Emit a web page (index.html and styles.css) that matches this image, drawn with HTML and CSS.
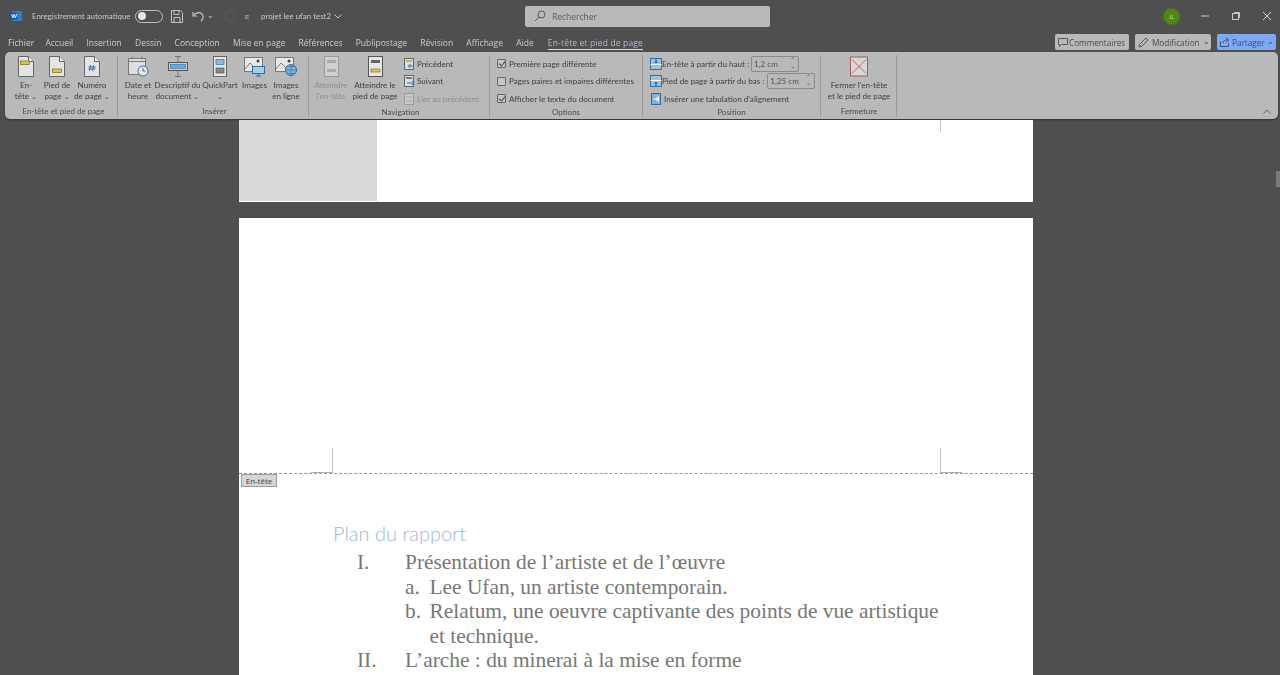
FILE: index.html
```html
<!DOCTYPE html>
<html lang="fr">
  <head>
    <meta charset="utf-8" />
    <meta name="viewport" content="width=device-width, initial-scale=1.0" />
    <title>projet lee ufan test2</title>
    <link rel="stylesheet" href="styles.css">
  </head>

  <body>
    <header class="titlebar">
      <svg class="wordlogo" width="12" height="10" viewBox="0 0 12 10"><rect x="2" y="0" width="10" height="10" rx="1" fill="#2b7cd3"/><rect x="0" y="1.5" width="7" height="7" fill="#1a4fa0"/><text x="1.2" y="7.2" font-size="6" font-weight="700" fill="#fff" font-family="Liberation Sans">W</text></svg>
      <span class="autosave">Enregistrement automatique</span>
      <span class="toggle"><span class="knob"></span></span>
      <svg class="qa qa-save" width="12" height="13" viewBox="0 0 12 13" fill="none" stroke="#c4c4c4"><path d="M.5.5h9l2 2v10H.5z"/><path d="M3 .5v4h5v-4M3 12.5v-5h6v5"/></svg>
      <svg class="qa qa-undo" width="12" height="11" viewBox="0 0 12 11" fill="none" stroke="#c4c4c4" stroke-width="1.2"><path d="M1 1v4h4"/><path d="M1.2 5C3 1.8 7 .8 9.500 2.500c2.500 2 2 5.500-.5 7.500"/></svg>
      <span class="caret qa-caret">⌄</span>
      <svg class="qa qa-redo" width="12" height="12" viewBox="0 0 12 12" fill="none" stroke="#5c5c5c"><circle cx="6" cy="6" r="5"/></svg>
      <span class="qa-more">≡</span>
      <span class="doctitle">projet lee ufan test2</span>
      <svg class="qa-chev" width="8" height="5" viewBox="0 0 8 5" fill="none" stroke="#c8c8c8"><path d="M.5.5 4 4 7.500.5"/></svg>
      <div class="search">
        <svg width="12" height="12" viewBox="0 0 12 12" fill="none" stroke="#555"><circle cx="7.500" cy="4.500" r="3.500"/><path d="M5 7 1 11"/></svg>
        <span>Rechercher</span>
      </div>
      <span class="avatar">JL</span>
      <svg class="winbtn" width="10" height="10" viewBox="0 0 10 10" stroke="#c8c8c8" fill="none"><path d="M1 5h8"/></svg>
      <svg class="winbtn" width="10" height="10" viewBox="0 0 10 10" stroke="#c8c8c8" fill="none"><rect x="1.500" y="2.500" width="6" height="6"/><path d="M3.500 2.500v-1h5v5h-1"/></svg>
      <svg class="winbtn" width="10" height="10" viewBox="0 0 10 10" stroke="#d0d0d0" fill="none"><path d="m1 1 8 8M9 1 1 9"/></svg>
    </header>

    <nav class="tabs">
      <a class="first">Fichier</a>
      <a>Accueil</a>
      <a>Insertion</a>
      <a>Dessin</a>
      <a>Conception</a>
      <a>Mise en page</a>
      <a>Références</a>
      <a>Publipostage</a>
      <a>Révision</a>
      <a>Affichage</a>
      <a>Aide</a>
      <a class="active">En-tête et pied de page</a>
      <div class="tabactions">
        <button class="pill p-comments">
          <svg width="10" height="10" viewBox="0 0 10 10" fill="none" stroke="#555"><path d="M.5 1.500h9v6h-6l-2 2v-2h-1z"/></svg>
          Commentaires
        </button>
        <button class="pill p-edit">
          <svg width="11" height="11" viewBox="0 0 11 11" fill="none" stroke="#555"><path d="M1 10l.7-2.800L8 1l2 2-6.200 6.300z"/></svg>
          Modification <span class="caret">⌄</span>
        </button>
        <button class="pill share">
          <svg width="10" height="10" viewBox="0 0 10 10" fill="none" stroke="#2f4f8f"><path d="M.5 4.500v5h8v-3M3 6c0-2 2-3 4-3M6 .8 8.800 3 6 5.200"/></svg>
          Partager <span class="caret">⌄</span>
        </button>
      </div>
    </nav>

    <section class="ribbon">
      <div class="group g1">
        <div class="tools">
          <div class="big w32">
            <svg class="ico" width="16" height="21" viewBox="0 0 16 21"><path d="M.5.5h10l5 5v15H.5z" fill="#e4e4e4" stroke="#666"/><path d="M10.500.5v5h5" fill="#f4f4f4" stroke="#666"/><rect x="2.500" y="5" width="9" height="3.500" fill="#dcc64a" stroke="#7a6a20" stroke-width=".7"/></svg>
            <span>En-<br>tête <i>⌄</i></span>
          </div>
          <div class="big w30">
            <svg class="ico" width="16" height="21" viewBox="0 0 16 21"><path d="M.5.5h10l5 5v15H.5z" fill="#e4e4e4" stroke="#666"/><path d="M10.500.5v5h5" fill="#f4f4f4" stroke="#666"/><rect x="3.500" y="13" width="9" height="3.500" fill="#dcc64a" stroke="#7a6a20" stroke-width=".7"/></svg>
            <span>Pied de<br>page <i>⌄</i></span>
          </div>
          <div class="big w40">
            <svg class="ico" width="16" height="21" viewBox="0 0 16 21"><path d="M.5.5h10l5 5v15H.5z" fill="#e4e4e4" stroke="#666"/><path d="M10.500.5v5h5" fill="#f4f4f4" stroke="#666"/><path d="M6.500 9l-1 6M9.500 9l-1 6M4.500 11h7M4.500 13h7" stroke="#2f6fa8" fill="none"/></svg>
            <span>Numéro<br>de page <i>⌄</i></span>
          </div>
        </div>
        <div class="grouplabel">En-tête et pied de page</div>
      </div>

      <div class="group g2">
        <div class="tools">
          <div class="big w34">
            <svg class="ico" width="21" height="21" viewBox="0 0 21 21"><rect x=".5" y="2.500" width="17" height="16" fill="#dedede" stroke="#777"/><path d="M.5 5.500h17M4 .5v3M14 .5v3" stroke="#777" fill="none"/><circle cx="15" cy="15" r="5" fill="#e9e9e9" stroke="#2f6fa8"/><path d="M15 12v3h2.500" stroke="#2f6fa8" fill="none"/></svg>
            <span>Date et<br>heure</span>
          </div>
          <div class="big w45">
            <svg class="ico" width="20" height="21" viewBox="0 0 20 21"><path d="M7 .5h6M10 .5v20M7 20.500h6" stroke="#777" fill="none"/><rect x=".5" y="6.500" width="19" height="8" fill="#cfcfcf" stroke="#555"/><rect x="2.500" y="8.500" width="15" height="4" fill="#6fa8d0" stroke="#2f6fa8" stroke-width=".6"/></svg>
            <span>Descriptif du<br>document <i>⌄</i></span>
          </div>
          <div class="big w40">
            <svg class="ico" width="14" height="21" viewBox="0 0 14 21"><rect x=".5" y=".5" width="13" height="20" fill="#e6e6e6" stroke="#666"/><rect x="3" y="3.500" width="8" height="5" fill="#8fb7d8" stroke="#2f6fa8" stroke-width=".7"/><rect x="3" y="12" width="8" height="5" fill="#888" stroke="#555" stroke-width=".7"/></svg>
            <span>QuickPart<br><i>⌄</i></span>
          </div>
          <div class="big w29">
            <svg class="ico" width="21" height="21" viewBox="0 0 21 21"><rect x=".5" y="1.500" width="18" height="14" fill="#e8e8e8" stroke="#777"/><path d="M1 13l5-6 5 5" stroke="#777" fill="none"/><circle cx="14" cy="5" r="1.500" fill="#444"/><rect x="8.500" y="10.500" width="12" height="7" fill="#a9cde6" stroke="#2f6fa8"/><path d="M12 20h5M14.500 18v2" stroke="#2f6fa8"/></svg>
            <span>Images</span>
          </div>
          <div class="big w34">
            <svg class="ico" width="22" height="21" viewBox="0 0 22 21"><rect x=".5" y="1.500" width="18" height="14" fill="#e8e8e8" stroke="#777"/><path d="M1 13l5-6 5 5" stroke="#777" fill="none"/><circle cx="14" cy="5" r="1.500" fill="#444"/><circle cx="16" cy="14" r="5.500" fill="#7fb0d8" stroke="#2f6fa8"/><path d="M10.500 14h11M16 8.500v11M12 10.500h8M12 17.500h8" stroke="#2f6fa8" stroke-width=".6" fill="none"/></svg>
            <span>Images<br>en ligne</span>
          </div>
        </div>
        <div class="grouplabel">Insérer</div>
      </div>

      <div class="group g3">
        <div class="tools">
          <div class="big w38 off">
            <svg class="ico" width="15" height="21" viewBox="0 0 15 21"><rect x=".5" y=".5" width="14" height="20" fill="#cfcfcf" stroke="#999"/><rect x="3" y="4" width="9" height="3" fill="#aaa"/><rect x="3" y="13" width="9" height="3" fill="#aaa"/></svg>
            <span>Atteindre<br>l'en-tête</span>
          </div>
          <div class="big w48">
            <svg class="ico" width="15" height="21" viewBox="0 0 15 21"><rect x=".5" y=".5" width="14" height="20" fill="#e6e6e6" stroke="#555"/><rect x="3" y="4" width="9" height="3" fill="#666"/><rect x="3" y="13" width="9" height="3" fill="#dcc64a" stroke="#7a6a20" stroke-width=".6"/></svg>
            <span>Atteindre le<br>pied de page</span>
          </div>
          <div class="smallcol nav">
            <div class="row">
              <svg width="11" height="12" viewBox="0 0 11 12"><rect x=".5" y=".5" width="9" height="11" fill="#ddd" stroke="#666"/><rect x="2" y="2" width="6" height="2" fill="#c9b545"/><path d="M10 8H4.500M6.500 6l-2 2 2 2" stroke="#2f6fa8" fill="none"/></svg>
              Précédent
            </div>
            <div class="row">
              <svg width="11" height="12" viewBox="0 0 11 12"><rect x=".5" y=".5" width="9" height="11" fill="#ddd" stroke="#666"/><rect x="2" y="2" width="6" height="2" fill="#777"/><path d="M3 8h7M8 6l2 2-2 2" stroke="#2f6fa8" fill="none"/></svg>
              Suivant
            </div>
            <div class="row off">
              <svg width="11" height="12" viewBox="0 0 11 12"><rect x=".5" y=".5" width="9" height="11" fill="#c8c8c8" stroke="#999"/><path d="M2 4h6M2 8h6" stroke="#a5a5a5"/></svg>
              Lier au précédent
            </div>
          </div>
        </div>
        <div class="grouplabel">Navigation</div>
      </div>

      <div class="group g4">
        <div class="smallcol">
          <label class="row"><span class="check on"></span>Première page différente</label>
          <label class="row"><span class="check"></span>Pages paires et impaires différentes</label>
          <label class="row"><span class="check on"></span>Afficher le texte du document</label>
        </div>
        <div class="grouplabel">Options</div>
      </div>

      <div class="group g5">
        <div class="smallcol">
          <div class="row tight">
            <svg width="12" height="12" viewBox="0 0 12 12"><rect x=".5" y=".5" width="11" height="11" fill="#9cc3e0" stroke="#2f6fa8"/><path d="M.5 6.500h11" stroke="#fff"/><path d="M6 1v4M4.500 3.500 6 5l1.500-1.500" stroke="#1e4f80" fill="none"/></svg>
            En-tête à partir du haut :
            <span class="spin first">1,2 cm<em>⌃<br>⌄</em></span>
          </div>
          <div class="row tight">
            <svg width="12" height="12" viewBox="0 0 12 12"><rect x=".5" y=".5" width="11" height="11" fill="#9cc3e0" stroke="#2f6fa8"/><path d="M.5 5.500h11" stroke="#fff"/><path d="M6 11V7M4.500 8.500 6 7l1.500 1.500" stroke="#1e4f80" fill="none"/></svg>
            Pied de page à partir du bas :
            <span class="spin">1,25 cm<em>⌃<br>⌄</em></span>
          </div>
          <div class="row wide">
            <svg width="10" height="12" viewBox="0 0 10 12"><rect x=".5" y=".5" width="9" height="11" fill="#7fb0d8" stroke="#2f6fa8"/><path d="M2 6h5M5 4l2 2-2 2M7.500 3v6" stroke="#fff" fill="none"/></svg>
            Insérer une tabulation d'alignement
          </div>
        </div>
        <div class="grouplabel">Position</div>
      </div>

      <div class="group g6">
        <div class="tools">
          <div class="big closebtn">
            <svg class="ico" width="18" height="20" viewBox="0 0 18 20"><rect x=".5" y=".5" width="17" height="19" fill="#d8d8d8" stroke="#a85a5a"/><path d="m2 3 14 14M16 3 2 17" stroke="#c46060"/></svg>
            <span>Fermer l'en-tête<br>et le pied de page</span>
          </div>
        </div>
        <div class="grouplabel">Fermeture</div>
      </div>

      <svg class="collapse" width="8" height="5" viewBox="0 0 8 5" fill="none" stroke="#666"><path d="M.5 4.500 4 1l3.500 3.500"/></svg>
    </section>

    <main class="docarea">
      <section class="page prevpage">
        <div class="greyblock"></div>
        <span class="mark"></span>
      </section>

      <section class="page current">
        <div class="headerzone">
          <span class="crop crop-l"></span>
          <span class="crop crop-r"></span>
          <span class="headertag">En-tête</span>
        </div>
        <article class="body">
          <h2>Plan du rapport</h2>
          <ol class="plan">
            <li><b>I.</b>Présentation de l’artiste et de l’œuvre</li>
            <li class="sub"><b>a.</b>Lee Ufan, un artiste contemporain.</li>
            <li class="sub"><b>b.</b>Relatum, une oeuvre captivante des points de vue artistique<br>et technique.</li>
            <li><b>II.</b>L’arche : du minerai à la mise en forme</li>
          </ol>
        </article>
      </section>
    </main>

    <div class="thumb"></div>
  </body>
</html>
```

FILE: styles.css
```css
* {
  box-sizing: border-box;
  margin: 0;
}

html,
body {
  height: 675px;
  overflow: hidden;
}

body {
  background-color: #4f4f4f;
  font-family: Lato, "Open Sans", sans-serif;
  font-size: 8.1px;
  color: #3f3f3f;
  position: relative;
  filter: blur(0.3px);
}

svg {
  display: block;
  flex: none;
}

/* title bar */
.titlebar {
  display: flex;
  align-items: center;
  height: 32px;
  color: #c8c8c8;
}

.wordlogo {
  margin-left: 10px;
}

.autosave {
  margin-left: 10px;
  width: 103px;
  font-size: 7.9px;
  white-space: nowrap;
}

.toggle {
  display: block;
  width: 28px;
  height: 13px;
  border: 1px solid #c4c4c4;
  border-radius: 7px;
  padding: 1.5px 2px;
}

.knob {
  display: block;
  width: 8px;
  height: 8px;
  border-radius: 50%;
  background: #e8e8e8;
}

.qa-save {
  margin-left: 8px;
}

.qa-undo {
  margin-left: 9px;
}

.qa-caret {
  margin-left: 3px;
  margin-top: -4px;
}

.qa-redo {
  margin-left: 9px;
}

.qa-more {
  margin-left: 9px;
  width: 17px;
  font-size: 9px;
}

.doctitle {
  width: 70px;
  font-size: 7.9px;
  white-space: nowrap;
}

.qa-chev {
  margin-left: 3px;
}

.search {
  display: flex;
  align-items: center;
  gap: 6px;
  width: 245px;
  height: 21px;
  margin-left: 183px;
  padding-left: 9px;
  background: #b9b9b9;
  border-radius: 2px;
  color: #5c5c5c;
  font-family: "Open Sans", sans-serif;
  font-size: 8.5px;
}

.avatar {
  width: 15px;
  height: 15px;
  margin-left: 394px;
  border-radius: 50%;
  background: #4f8a10;
  box-shadow: 0 0 3px #5c9c10;
  color: #b9d890;
  font-size: 6px;
  line-height: 15px;
  text-align: center;
}

.winbtn {
  margin-left: 21px;
}

/* tabs */
.tabs {
  display: flex;
  align-items: center;
  gap: 13.2px;
  height: 20px;
  padding-left: 8px;
  color: #cdcdcd;
  font-family: "Open Sans", sans-serif;
  font-size: 8.5px;
  white-space: nowrap;
}

.tabs .first {
  margin-right: -2px;
}

.tabs .active {
  color: #aebcd0;
  border-bottom: 1px solid #d5dce8;
  padding: 1px 0;
  margin-top: 2px;
  margin-left: 1px;
  letter-spacing: 0.16px;
}

.tabactions {
  display: flex;
  gap: 6px;
  margin-left: auto;
  margin-right: 4px;
}

.pill {
  display: flex;
  align-items: center;
  height: 16px;
  padding: 0 0 0 3px;
  border: 0;
  border-radius: 2px;
  background: #b9b9b9;
  color: #4a4a4a;
  font: inherit;
  font-size: 8.2px;
  white-space: nowrap;
}

.p-comments {
  width: 74px;
  gap: 1px;
}

.p-edit {
  width: 76px;
  gap: 3px;
}

.pill.share {
  width: 59px;
  gap: 2px;
  background: #7fa9f2;
  color: #2f4f8f;
}

.caret {
  font-size: 8px;
  line-height: 8px;
  margin-top: -3px;
}

/* ribbon */
.ribbon {
  position: relative;
  display: flex;
  height: 67px;
  margin: 0 2px 1px 5px;
  padding-top: 3px;
  background: #b9b9b9;
  border-radius: 5px;
  box-shadow: 0 1px 2px rgba(0, 0, 0, 0.35);
}

.group {
  position: relative;
  display: flex;
  flex-direction: column;
  height: 62px;
  border-right: 1px solid #9a9a9a;
}

.g1 {
  width: 113px;
  padding-left: 5px;
}

.g2 {
  width: 191px;
  padding-left: 3px;
}

.g3 {
  width: 181px;
  padding-left: 3px;
}

.g4 {
  width: 153px;
  padding-left: 7px;
}

.g5 {
  width: 178px;
  padding-left: 7px;
}

.g6 {
  width: 76px;
  padding-left: 1px;
}

.g4 .grouplabel,
.g5 .grouplabel {
  margin-left: -7px;
}

.tools {
  display: flex;
  height: 52px;
}

.big {
  display: flex;
  flex-direction: column;
  align-items: center;
  text-align: center;
  line-height: 11px;
  padding-top: 1px;
  white-space: nowrap;
}

.big .ico {
  height: 21px;
  margin-bottom: 3px;
}

.big i {
  font-style: normal;
  font-size: 7px;
}

.w29 {
  width: 29px;
}

.w30 {
  width: 30px;
}

.w32 {
  width: 32px;
}

.w34 {
  width: 34px;
}

.w38 {
  width: 38px;
}

.w40 {
  width: 40px;
}

.w45 {
  width: 45px;
}

.w48 {
  width: 50px;
}

.closebtn {
  width: 74px;
}

.off {
  color: #8f8f8f;
}

.grouplabel {
  text-align: center;
  color: #4a4a4a;
  font-size: 8px;
  line-height: 11px;
}

.smallcol {
  display: flex;
  flex-direction: column;
  height: 52px;
  white-space: nowrap;
}

.nav {
  margin-left: 4px;
}

.row {
  display: flex;
  align-items: center;
  flex: none;
  gap: 2px;
  height: 17.5px;
}

.row.tight {
  gap: 0;
}

.row.wide {
  gap: 3px;
  margin-left: 1px;
}

.check {
  flex: none;
  width: 9px;
  height: 9px;
  margin-right: 1px;
  border: 1px solid #666;
  border-radius: 1px;
  background: #c6c6c6;
  position: relative;
}

.check.on::after {
  content: "";
  position: absolute;
  left: 2px;
  top: 0;
  width: 3px;
  height: 5px;
  border: solid #444;
  border-width: 0 1px 1px 0;
  transform: rotate(40deg);
}

.spin {
  position: relative;
  display: block;
  width: 48px;
  height: 16px;
  margin-left: 3px;
  padding-left: 2px;
  border: 1px solid #8a8a8a;
  border-radius: 2px;
  line-height: 14px;
  color: #505050;
}

.spin.first {
  margin-left: 2px;
}

.spin em {
  position: absolute;
  right: 3px;
  top: 0;
  font-style: normal;
  font-size: 6px;
  line-height: 6px;
}

.collapse {
  position: absolute;
  right: 7px;
  bottom: 5px;
}

/* document */
.docarea {
  display: flex;
  flex-direction: column;
  gap: 16px;
  padding-left: 239px;
}

.page {
  position: relative;
  width: 794px;
  background: #fff;
}

.prevpage {
  height: 82px;
}

.current {
  height: 470px;
}

.greyblock {
  width: 138px;
  height: 81px;
  background: #d9d9d9;
}

.mark {
  position: absolute;
  left: 701px;
  top: 0;
  width: 1px;
  height: 12px;
  background: #c8c8c8;
}

.headerzone {
  position: relative;
  height: 256px;
  border-bottom: 1px dashed #9a9a9a;
}

.crop {
  position: absolute;
  bottom: 0;
  width: 22px;
  height: 25px;
  border-bottom: 1px solid #b0b0b0;
}

.crop-l {
  left: 72px;
  border-right: 1px solid #c4c4c4;
}

.crop-r {
  left: 701px;
  border-left: 1px solid #c4c4c4;
}

.headertag {
  position: absolute;
  left: 2px;
  top: 256px;
  width: 36px;
  height: 13px;
  background: #d6d6d6;
  border: 1px solid #9a9a9a;
  color: #444;
  font-family: "Open Sans", sans-serif;
  font-size: 8px;
  line-height: 11px;
  text-align: center;
}

.body {
  padding: 46px 0 0 94px;
}

.body h2 {
  color: #9db6d2;
  font-family: Lato, "Open Sans", sans-serif;
  font-size: 20px;
  font-weight: 300;
  line-height: 26px;
}

.plan {
  list-style: none;
  padding: 0 0 0 72px;
  margin-top: 4px;
  font-family: "Liberation Serif", serif;
  font-size: 21.4px;
  line-height: 24.5px;
  color: #777;
}

.plan li {
  position: relative;
}

.plan b {
  position: absolute;
  left: -48px;
  font-weight: 400;
}

.plan .sub {
  padding-left: 24.5px;
}

.plan .sub b {
  left: 0;
}

.thumb {
  position: absolute;
  right: 0;
  top: 171px;
  width: 4px;
  height: 16px;
  background: #7a7a7a;
}
```
